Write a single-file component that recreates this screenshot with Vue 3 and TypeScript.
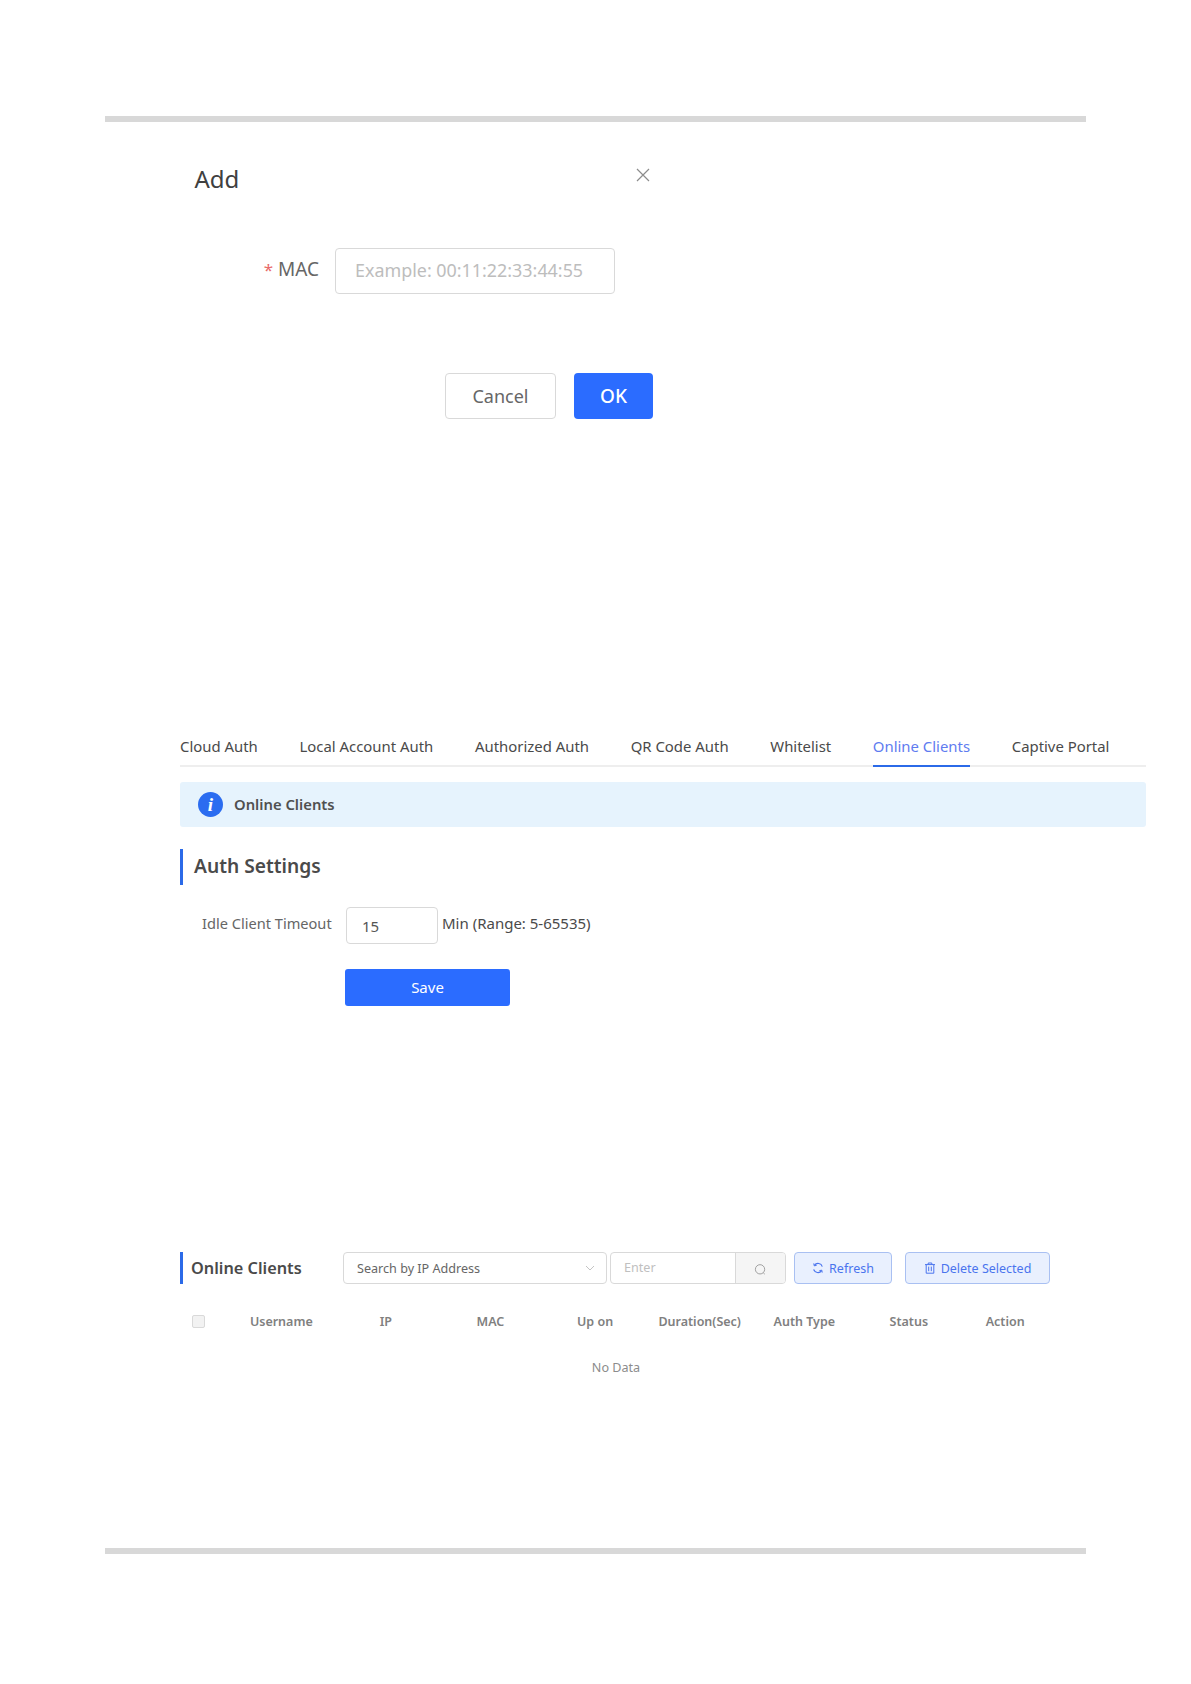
<script setup lang="ts">
const tabs: string[] = ['Cloud Auth', 'Local Account Auth', 'Authorized Auth', 'QR Code Auth', 'Whitelist', 'Online Clients', 'Captive Portal']
const cols: string[] = ['Username', 'IP', 'MAC', 'Up on', 'Duration(Sec)', 'Auth Type', 'Status', 'Action']
</script>

<template>
  <div class="page">
    <div class="rule"></div>

    <section class="dialog">
      <header class="dialog-head">
        <h2>Add</h2>
        <svg class="close" viewBox="0 0 14 14" width="14" height="14">
          <path d="M1 1 L13 13 M13 1 L1 13" stroke="#8c8c8c" stroke-width="1.2" fill="none" />
        </svg>
      </header>
      <div class="mac-row">
        <label class="mac-label"><span class="req">*</span> MAC</label>
        <div class="mac-input">Example: 00:11:22:33:44:55</div>
      </div>
      <div class="dialog-actions">
        <button class="btn-cancel">Cancel</button>
        <button class="btn-ok">OK</button>
      </div>
    </section>

    <section class="auth">
      <nav class="tabs">
        <span v-for="t in tabs" :key="t" class="tab" :class="{ active: t === 'Online Clients' }">{{ t }}</span>
      </nav>
      <div class="notice">
        <span class="info-icon">i</span>
        <span class="notice-text">Online Clients</span>
      </div>
      <h3 class="heading">Auth Settings</h3>
      <div class="idle-row">
        <span class="idle-label">Idle Client Timeout</span>
        <div class="idle-input">15</div>
        <span class="idle-unit">Min (Range: 5-65535)</span>
      </div>
      <button class="btn-save">Save</button>
    </section>

    <section class="clients">
      <div class="toolbar">
        <h3 class="heading-small">Online Clients</h3>
        <div class="select">
          <span>Search by IP Address</span>
          <svg viewBox="0 0 10 6" width="10" height="6"><path d="M1 1 L5 5 L9 1" stroke="#c4c4c4" stroke-width="1" fill="none" /></svg>
        </div>
        <div class="search">
          <span class="search-input">Enter</span>
          <span class="search-btn">
            <svg class="search-icon" viewBox="0 0 14 14" width="13" height="13"><circle cx="6.5" cy="6.8" r="5" stroke="#9a9a9a" stroke-width="1" fill="none" /><path d="M10 10.6 L11.6 12" stroke="#9a9a9a" stroke-width="1" fill="none" /></svg>
          </span>
        </div>
        <button class="btn-light refresh">
          <svg viewBox="0 0 12 12" width="12" height="12"><path d="M10.3 4.6 A4.4 4.4 0 0 0 2.4 3.4 M1.7 7.4 A4.4 4.4 0 0 0 9.6 8.6" stroke="#4a74ee" stroke-width="1.1" fill="none" /><path d="M1.8 1.4 L2.2 3.8 L4.6 3.4 M10.2 10.6 L9.8 8.2 L7.4 8.6" stroke="#4a74ee" stroke-width="1" fill="none" /></svg>
          Refresh
        </button>
        <button class="btn-light delete">
          <svg viewBox="0 0 12 12" width="12" height="12"><path d="M1 2.6 H11 M4.2 2.6 V1 H7.8 V2.6 M2.2 2.6 V11.2 H9.8 V2.6 M4.7 4.6 V9.2 M7.3 4.6 V9.2" stroke="#4a74ee" stroke-width="1" fill="none" /></svg>
          Delete Selected
        </button>
      </div>
      <div class="thead">
        <span class="check-cell"><i class="check"></i></span>
        <span v-for="c in cols" :key="c" class="th">{{ c }}</span>
      </div>
      <div class="empty">No Data</div>
    </section>

    <div class="rule bottom"></div>
  </div>
</template>

<style>
html, body { margin: 0; background: #fff; }
</style>

<style scoped>
.page {
  width: 1191px;
  height: 1684px;
  box-sizing: border-box;
  padding-top: 116px;
  font-family: "Noto Sans", "Open Sans", sans-serif;
  color: #4a4a4a;
  overflow: hidden;
}
button { font-family: inherit; cursor: pointer; box-sizing: border-box; }
.rule { width: 981px; height: 6px; margin-left: 105px; background: #d8d8d8; }
.rule.bottom { margin-top: 170px; }

.dialog { width: 459px; margin-left: 194px; }
.dialog-head { display: flex; justify-content: space-between; align-items: flex-start; height: 126px; padding-top: 40px; box-sizing: border-box; }
.dialog-head h2 { margin: 0 0 0 0.5px; font-size: 24px; line-height: 34px; font-weight: 400; color: #404040; }
.close { margin: 6px 3px 0 0; }
.mac-row { display: flex; align-items: flex-start; gap: 16px; }
.mac-label { width: 125px; text-align: right; font-size: 19px; line-height: 42px; color: #666; }
.req { color: #e96a6a; font-size: 17px; }
.mac-input {
  width: 280px; height: 46px; box-sizing: border-box; border: 1px solid #d9d9d9; border-radius: 4px;
  padding-left: 19px; font-size: 17.9px; line-height: 43px; color: #bdbdbd;
}
.dialog-actions { display: flex; justify-content: flex-end; gap: 18px; margin-top: 79px; }
.btn-cancel { width: 111px; height: 46px; background: #fff; border: 1px solid #d9d9d9; border-radius: 4px; font-size: 18px; color: #666; }
.btn-ok { width: 79px; height: 46px; background: #2b6cff; border: 0; border-radius: 4px; font-size: 19px; font-weight: 500; color: #fff; }

.auth { margin: 307px 0 0 180px; width: 966px; }
.tabs { display: flex; gap: 41.7px; height: 41px; box-sizing: border-box; border-bottom: 2px solid #eeeeee; }
.tab { height: 41px; box-sizing: border-box; font-size: 14.9px; line-height: 40px; color: #4a4a4a; }
.tab.active { color: #5f7cf0; border-bottom: 2px solid #2b6ae8; }
.notice { display: flex; align-items: center; gap: 11px; height: 45px; margin-top: 15px; padding-left: 18px; background: #e6f3fd; border-radius: 3px; }
.info-icon {
  width: 25px; height: 25px; border-radius: 50%; background: #2b6cf0; color: #fff;
  font: italic 700 19px/25px "Liberation Serif", serif; text-align: center;
}
.notice-text { padding-bottom: 2px; font-size: 14.8px; font-weight: 600; color: #505050; }
.heading { margin: 22px 0 0; height: 36px; padding-left: 11px; border-left: 3px solid #2b6ae8; font-size: 19.2px; font-weight: 600; line-height: 34px; color: #4a4a4a; }
.idle-row { display: flex; align-items: flex-start; margin-top: 22px; }
.idle-label { width: 153px; padding-left: 22px; box-sizing: border-box; font-size: 14.6px; line-height: 33px; color: #666; white-space: nowrap; }
.idle-input { width: 92px; height: 37px; margin-left: 13px; box-sizing: border-box; border: 1px solid #d9d9d9; border-radius: 4px; padding-left: 15px; font-size: 15px; line-height: 36px; color: #555; }
.idle-unit { margin-left: 4px; font-size: 15px; line-height: 33px; color: #4a4a4a; }
.btn-save { display: block; width: 165px; height: 37px; margin: 25px 0 0 165px; padding: 0 0 2px; background: #2b6cff; border: 0; border-radius: 3px; font-size: 15px; color: #fff; }

.clients { margin: 246px 0 0 180px; width: 872px; }
.toolbar { display: flex; align-items: stretch; height: 32px; }
.heading-small { width: 163px; margin: 0; box-sizing: border-box; padding-left: 8px; border-left: 3px solid #2b6ae8; font-size: 16.3px; font-weight: 600; line-height: 32px; color: #4a4a4a; white-space: nowrap; }
.select { width: 264px; box-sizing: border-box; border: 1px solid #d9d9d9; border-radius: 4px; display: flex; align-items: center; justify-content: space-between; padding: 0 11px 0 13px; font-size: 12.6px; color: #666; }
.search { display: flex; width: 176px; margin-left: 3px; box-sizing: border-box; border: 1px solid #d9d9d9; border-radius: 4px; overflow: hidden; }
.search-input { flex: 1; padding-left: 13px; font-size: 12.6px; line-height: 30px; color: #c0c0c0; }
.search-btn { width: 49px; display: flex; align-items: center; justify-content: center; background: #f5f5f5; border-left: 1px solid #d9d9d9; }
.search-icon { margin-top: 2px; }
.btn-light { display: flex; align-items: center; justify-content: center; gap: 5px; height: 32px; padding: 0; background: #e9f0fe; border: 1px solid #a9c0f2; border-radius: 4px; font-size: 12.5px; color: #4a74ee; }
.refresh { width: 98px; margin-left: 8px; }
.delete { width: 145px; margin-left: 13px; }
.thead { display: grid; grid-template-columns: 49px repeat(7, 104.6px) 88px; align-items: center; height: 32px; margin-top: 21px; }
.check-cell { padding-left: 12px; display: flex; }
.check { display: block; width: 13px; height: 13px; box-sizing: border-box; border: 1px solid #d9d9d9; border-radius: 2px; background: #f2f2f2; }
.th { text-align: center; font-size: 12.5px; font-weight: 600; color: #808080; }
.empty { width: 872px; text-align: center; margin-top: 21px; font-size: 12.6px; line-height: 20px; color: #8c8c8c; }
</style>
